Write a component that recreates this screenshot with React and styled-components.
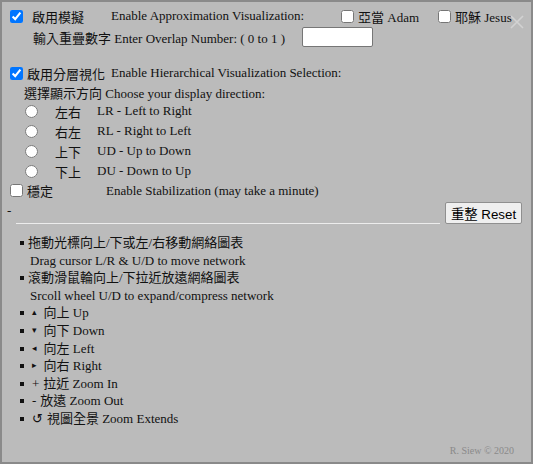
import React from "react";
import styled, { createGlobalStyle } from "styled-components";

const GlobalStyle = createGlobalStyle`
  html, body { margin: 0; padding: 0; }
  body {
    font-family: "Liberation Serif", "Noto Sans CJK TC", serif;
    font-size: 13px;
    color: #111;
  }
`;

const directions = [
  { zh: "左右", en: "LR - Left to Right" },
  { zh: "右左", en: "RL - Right to Left" },
  { zh: "上下", en: "UD - Up to Down" },
  { zh: "下上", en: "DU - Down to Up" },
];

const moves = [
  { icon: "▴", zh: "向上", en: "Up" },
  { icon: "▾", zh: "向下", en: "Down" },
  { icon: "◂", zh: "向左", en: "Left" },
  { icon: "▸", zh: "向右", en: "Right" },
];

const zooms = [
  { sign: "+", zh: "拉近", en: "Zoom In" },
  { sign: "-", zh: "放遠", en: "Zoom Out" },
  { sign: "↺", zh: "視圖全景", en: "Zoom Extends" },
];

export default function App() {
  return (
    <>
      <GlobalStyle />
      <Panel>
        <Close aria-label="close">
          <svg width="14" height="14" viewBox="0 0 14 14">
            <path d="M1 1 L13 13 M13 1 L1 13" stroke="#d2d2d2" strokeWidth="1.6" />
          </svg>
        </Close>

        {/* approximation */}
        <Row $h={20} $indent={8}>
          <Check type="checkbox" defaultChecked />
          <Zh $gap={9} $w={79}>啟用模擬</Zh>
          <En $w={230}>Enable Approximation Visualization:</En>
          <Check type="checkbox" />
          <Zh $gap={4} $w={80}>
            亞當 <En>Adam</En>
          </Zh>
          <Check type="checkbox" />
          <Zh $gap={4}>
            耶穌 <En>Jesus</En>
          </Zh>
        </Row>
        <Row $h={22} $indent={31}>
          <Zh $w={269}>
            輸入重疊數字 <En>Enter Overlap Number: ( 0 to 1 )</En>
          </Zh>
          <NumberInput type="text" />
        </Row>

        {/* hierarchical */}
        <Row $h={20} $indent={8} $top={15}>
          <Check type="checkbox" defaultChecked />
          <Zh $gap={4} $w={84}>啟用分層視化</Zh>
          <En>Enable Hierarchical Visualization Selection:</En>
        </Row>
        <Row $h={18} $indent={22}>
          <Zh>
            選擇顯示方向 <En>Choose your display direction:</En>
          </Zh>
        </Row>
        {directions.map((d) => (
          <Row key={d.zh} $h={20} $indent={23}>
            <Radio type="radio" name="direction" />
            <Zh $gap={17} $w={42}>{d.zh}</Zh>
            <En>{d.en}</En>
          </Row>
        ))}
        <Row $h={19} $indent={8}>
          <Check type="checkbox" />
          <Zh $gap={4} $w={79}>穩定</Zh>
          <En>Enable Stabilization (may take a minute)</En>
        </Row>

        <ResetRow>
          <Dash>-</Dash>
          <Rule />
          <ResetButton type="button">重整 Reset</ResetButton>
        </ResetRow>

        <HelpList>
          <li>
            <Item>拖動光標向上/下或左/右移動網絡圖表</Item>
            <EnLine>Drag cursor L/R &amp; U/D to move network</EnLine>
          </li>
          <li>
            <Item>滾動滑鼠輪向上/下拉近放遠網絡圖表</Item>
            <EnLine>Srcoll wheel U/D to expand/compress network</EnLine>
          </li>
          {moves.map((m) => (
            <li key={m.en}>
              <Arrow>{m.icon}</Arrow>
              <Item>
                {m.zh} {m.en}
              </Item>
            </li>
          ))}
          {zooms.map((z) => (
            <li key={z.en}>
              <Sign>{z.sign}</Sign>
              <Item>
                {z.zh} {z.en}
              </Item>
            </li>
          ))}
        </HelpList>

        <Credit>R. Siew © 2020</Credit>
      </Panel>
    </>
  );
}

const Panel = styled.div`
  position: relative;
  width: 533px;
  height: 464px;
  box-sizing: border-box;
  border: 2px solid #8a8a8a;
  background: #bbbbbb;
  padding-top: 4px;
  display: flex;
  flex-direction: column;
`;

const Close = styled.div`
  position: absolute;
  top: 13px;
  right: 7px;
  width: 14px;
  height: 14px;
  display: flex;
`;

const Row = styled.div`
  display: flex;
  align-items: center;
  height: ${(p) => p.$h}px;
  padding-left: ${(p) => p.$indent || 0}px;
  margin-top: ${(p) => p.$top || 0}px;
  white-space: nowrap;
`;

const Zh = styled.span`
  font-family: "Liberation Serif", "Noto Sans CJK TC", serif;
  display: inline-block;
  margin-left: ${(p) => p.$gap || 0}px;
  ${(p) => (p.$w ? `width: ${p.$w}px; flex: none;` : "")}
`;

const En = styled.span`
  font-family: "Liberation Serif", serif;
  display: inline-block;
  ${(p) => (p.$w ? `width: ${p.$w}px; flex: none;` : "")}
`;

const Check = styled.input`
  width: 13px;
  height: 13px;
  margin: 0;
  flex: none;
  accent-color: #0075ff;
`;

const Radio = styled.input`
  width: 13px;
  height: 13px;
  margin: 0;
  flex: none;
`;

const NumberInput = styled.input`
  width: 71px;
  height: 20px;
  box-sizing: border-box;
  margin: 0;
  padding: 1px 2px;
  border: 1px solid #767676;
  border-radius: 2px;
  background: #fff;
  font-size: 13px;
`;

const ResetRow = styled.div`
  display: flex;
  align-items: flex-end;
  height: 22px;
  margin-top: 2px;
  padding: 0 9px 0 5px;
`;

const Dash = styled.span`
  align-self: flex-start;
  line-height: 15px;
  margin-top: 1px;
`;

const Rule = styled.div`
  flex: 1;
  height: 0;
  margin: 0 5px 0 5px;
  border-top: 1px solid #ececec;
`;

const ResetButton = styled.button`
  width: 77px;
  height: 22px;
  margin: 0;
  padding: 0;
  border: 1px solid #8f8f8f;
  border-radius: 2px;
  background: #efefef;
  color: #000;
  font-family: "Liberation Sans", "Noto Sans CJK TC", sans-serif;
  font-size: 13.33px;
`;

const HelpList = styled.ul`
  list-style: none;
  margin: 10px 0 0 0;
  padding: 0 0 0 26px;
  line-height: 17.6px;

  li {
    height: auto;
  }

  li::before {
    content: "";
    display: inline-block;
    width: 4px;
    height: 4px;
    background: #111;
    margin-left: -8px;
    margin-right: 4px;
    vertical-align: top;
    margin-top: 7px;
  }
`;

const Item = styled.span`
  display: inline-block;
  vertical-align: top;
  height: 17.6px;
  font-family: "Liberation Serif", "Noto Sans CJK TC", serif;
`;

const EnLine = styled.span`
  display: block;
  height: 17.6px;
  padding-left: 2px;
  font-family: "Liberation Serif", serif;
`;

const Arrow = styled.span`
  display: inline-block;
  vertical-align: top;
  height: 17.6px;
  font-family: "DejaVu Sans", sans-serif;
  font-size: 9px;
  margin: 0 7px 0 4px;
`;

const Sign = styled.span`
  display: inline-block;
  vertical-align: top;
  height: 17.6px;
  font-family: "Liberation Serif", "DejaVu Sans", serif;
  margin: 0 4px 0 4px;
`;

const Credit = styled.div`
  margin-top: auto;
  margin-bottom: 5px;
  padding-right: 17px;
  text-align: right;
  font-size: 10px;
  line-height: 12px;
  color: #8a8a8a;
`;
